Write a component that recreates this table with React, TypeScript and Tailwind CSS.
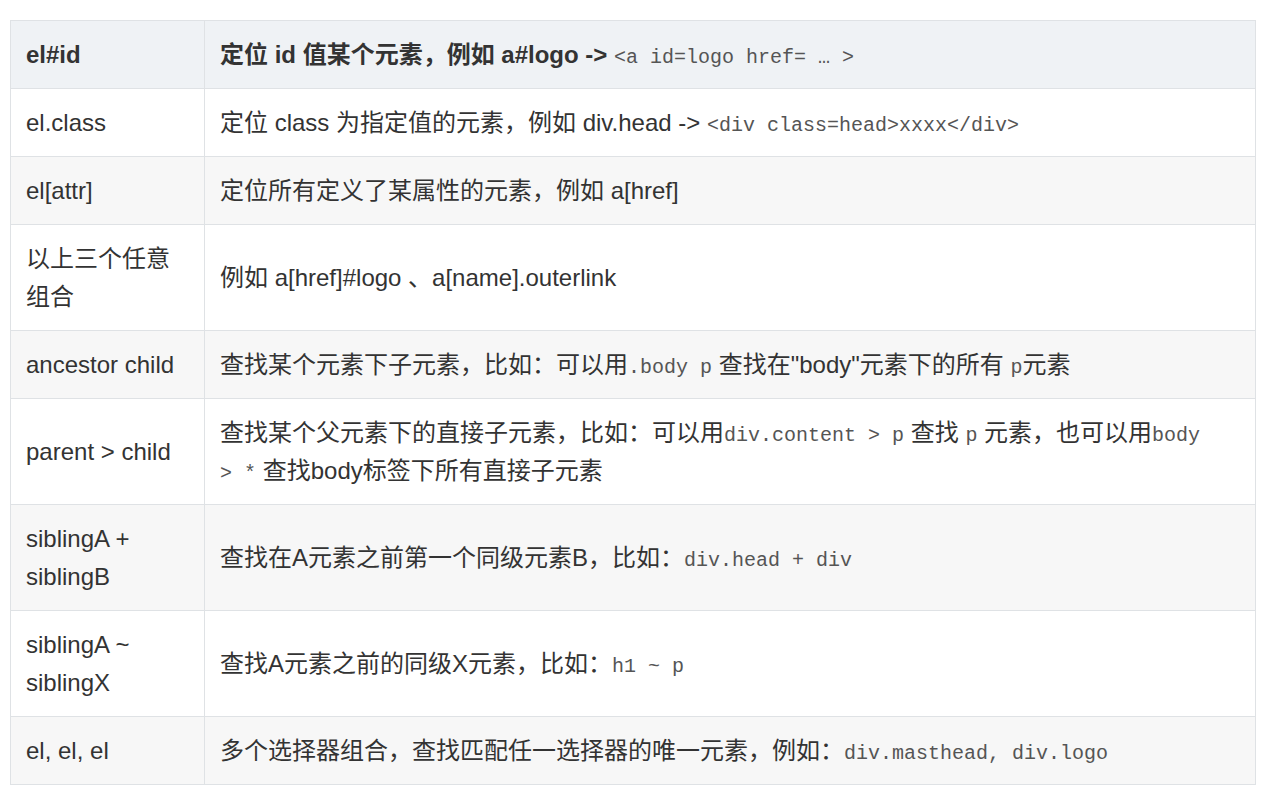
import React from 'react';

type Row = {
  name: React.ReactNode,
  desc: React.ReactNode,
};

function Code({ children }: { children: React.ReactNode }) {
  return (
    <code className="font-['Liberation_Mono','DejaVu_Sans_Mono',monospace] text-[20px] leading-none font-normal text-[#555]">
      {children}
    </code>
  );
}

const rows: Row[] = [
  {
    name: 'el.class',
    desc: (
      <>
        定位 class 为指定值的元素，例如 div.head -&gt; <Code>{'<div class=head>xxxx</div>'}</Code>
      </>
    ),
  },
  { name: 'el[attr]', desc: '定位所有定义了某属性的元素，例如 a[href]' },
  { name: '以上三个任意组合', desc: '例如 a[href]#logo 、a[name].outerlink' },
  {
    name: 'ancestor child',
    desc: (
      <>
        查找某个元素下子元素，比如：可以用<Code>.body p</Code> 查找在"body"元素下的所有 <Code>p</Code>元素
      </>
    ),
  },
  {
    name: 'parent > child',
    desc: (
      <>
        查找某个父元素下的直接子元素，比如：可以用<Code>div.content &gt; p</Code> 查找 <Code>p</Code> 元素，也可以用<Code>body</Code>
        {' '}
        <Code>&gt; *</Code> 查找body标签下所有直接子元素
      </>
    ),
  },
  {
    name: 'siblingA + siblingB',
    desc: (
      <>
        查找在A元素之前第一个同级元素B，比如：<Code>div.head + div</Code>
      </>
    ),
  },
  {
    name: 'siblingA ~ siblingX',
    desc: (
      <>
        查找A元素之前的同级X元素，比如：<Code>h1 ~ p</Code>
      </>
    ),
  },
  {
    name: 'el, el, el',
    desc: (
      <>
        多个选择器组合，查找匹配任一选择器的唯一元素，例如：<Code>div.masthead, div.logo</Code>
      </>
    ),
  },
];

export default function App() {
  return (
    <div className="min-h-[806px] bg-white pt-[20px] pl-[10px] font-['Liberation_Sans','Noto_Sans_CJK_SC',sans-serif] text-[24px] leading-[38px] text-[#333]">
      <table className="w-[1246px] border-collapse">
        <colgroup>
          <col className="w-[194px]" />
          <col />
        </colgroup>
        <thead>
          <tr className="bg-[#eff2f5]">
            <th className="border border-[#dfe2e5] px-[15px] py-[14.5px] text-left font-bold">el#id</th>
            <th className="border border-[#dfe2e5] px-[15px] py-[14.5px] text-left font-bold">
              定位 id 值某个元素，例如 a#logo -&gt; <Code>{'<a id=logo href= … >'}</Code>
            </th>
          </tr>
        </thead>
        <tbody>
          {rows.map((row, i) => (
            <tr key={i} className={i % 2 === 1 ? 'bg-[#f7f7f7]' : 'bg-white'}>
              <td className="border border-[#dfe2e5] px-[15px] py-[14.5px] align-middle">{row.name}</td>
              <td className="border border-[#dfe2e5] pl-[15px] pr-[45px] py-[14.5px] align-middle">{row.desc}</td>
            </tr>
          ))}
        </tbody>
      </table>
    </div>
  );
}
